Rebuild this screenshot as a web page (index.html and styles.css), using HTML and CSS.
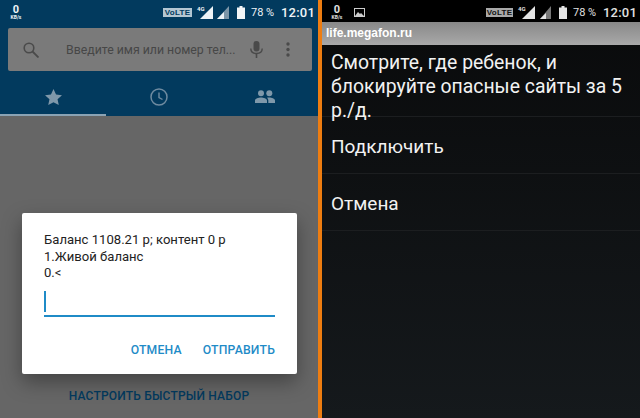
FILE: index.html
```html
<!DOCTYPE html>
<html lang="ru">
<head>
<meta charset="utf-8">
<title>USSD</title>
<link rel="stylesheet" href="styles.css">
</head>
<body>
<div class="page">
  <section class="phone left">
    <header class="header">
      <div class="status">
        <div class="speed"><span class="num">0</span><span class="unit">KB/s</span></div>
        <div class="spacer"></div>
        <span class="volte">VoLTE</span>
        <span class="net">4G</span>
        <svg class="sig" width="13" height="13" viewBox="0 0 13 13"><path d="M13 0V13H0Z" fill="#eef3f6"/></svg>
        <svg class="sig2" width="12" height="13" viewBox="0 0 12 13"><path d="M12 0V13H0Z" fill="#7d96a8"/><path d="M7 6V13H0Z" fill="#eef3f6"/></svg>
        <svg class="batt" width="8" height="13" viewBox="0 0 8 13"><path d="M2.500 0h3v1.500H8V13H0V1.500h2.500Z" fill="#f2f5f7"/></svg>
        <span class="pct">78 %</span>
        <span class="time">12:01</span>
      </div>
      <div class="search">
        <svg class="ic-search" width="16" height="16" viewBox="0 0 16 16"><circle cx="6" cy="6" r="4.800" fill="none" stroke="#4a4a4a" stroke-width="1.600"/><path d="M9.500 9.500l6 6" stroke="#4a4a4a" stroke-width="1.800"/></svg>
        <span class="hint">Введите имя или номер тел...</span>
        <svg class="ic-mic" width="13" height="17" viewBox="0 0 13 17"><rect x="3.500" y="0" width="6" height="10.500" rx="3" fill="#4a4a4a"/><path d="M.8 7.500c0 3.200 2.500 5 5.700 5s5.700-1.800 5.700-5" fill="none" stroke="#4a4a4a" stroke-width="1.400"/><path d="M6.500 12v5" stroke="#4a4a4a" stroke-width="1.600"/></svg>
        <svg class="ic-more" width="4" height="15" viewBox="0 0 4 15"><circle cx="2" cy="2" r="1.700" fill="#4a4a4a"/><circle cx="2" cy="7.500" r="1.700" fill="#4a4a4a"/><circle cx="2" cy="13" r="1.700" fill="#4a4a4a"/></svg>
      </div>
      <div class="tabs">
        <div class="tab active">
          <svg width="17" height="16" viewBox="0 0 18 17"><path d="M9 0l2.700 5.900 6.300.7-4.700 4.300 1.300 6.100L9 14l-5.600 3 1.300-6.100L0 6.600l6.300-.7Z" fill="#7f98aa"/></svg>
        </div>
        <div class="tab">
          <svg width="18" height="18" viewBox="0 0 18 18"><circle cx="9" cy="9" r="8" fill="none" stroke="#6f8ba0" stroke-width="1.500"/><path d="M9 4.500V9.500l3.500 2" fill="none" stroke="#6f8ba0" stroke-width="1.400"/></svg>
        </div>
        <div class="tab">
          <svg width="20" height="13" viewBox="0 0 20 13"><circle cx="6" cy="3.200" r="3" fill="#7f98aa"/><circle cx="14.300" cy="3.200" r="3" fill="#7f98aa"/><path d="M0 13v-2.500C0 8.500 3.500 7.500 6 7.500s6 1 6 3V13ZM13.300 13v-2.500c0-1.200-.5-2.100-1.400-2.800.8-.2 1.700-.2 2.400-.2 2.200 0 5.700 1 5.700 3V13Z" fill="#7f98aa"/></svg>
        </div>
      </div>
    </header>
    <div class="body">
      <div class="quick">НАСТРОИТЬ БЫСТРЫЙ НАБОР</div>
    </div>
    <div class="dialog">
      <p class="msg">Баланс 1108.21 р; контент 0 р<br>1.Живой баланс<br>0.&lt;</p>
      <div class="field"><span class="caret"></span></div>
      <div class="actions"><span>ОТМЕНА</span><span>ОТПРАВИТЬ</span></div>
    </div>
  </section>
  <div class="divider"></div>
  <section class="phone right">
    <div class="status dark">
      <div class="speed"><span class="num">0</span><span class="unit">KB/s</span></div>
      <svg class="pic" width="11" height="9" viewBox="0 0 11 9"><rect x=".5" y=".5" width="10" height="8" fill="none" stroke="#ccc"/><path d="M1 8l3-4 2 2 1-1 3 3Z" fill="#ccc"/></svg>
      <div class="spacer"></div>
      <span class="volte">VoLTE</span>
      <span class="net">4G</span>
      <svg class="sig" width="13" height="13" viewBox="0 0 13 13"><path d="M13 0V13H0Z" fill="#e4e4e4"/></svg>
      <svg class="sig2" width="11" height="13" viewBox="0 0 11 13"><path d="M11 0V13H0Z" fill="#777"/><path d="M6 7V13H0Z" fill="#e4e4e4"/></svg>
      <svg class="batt" width="8" height="13" viewBox="0 0 8 13"><path d="M2.500 0h3v1.500H8V13H0V1.500h2.500Z" fill="#e4e4e4"/></svg>
      <span class="pct">78 %</span>
      <span class="time">12:01</span>
    </div>
    <div class="urlbar">life.megafon.ru</div>
    <div class="menu">
      <div class="title">Смотрите, где ребенок, и блокируйте опасные сайты за 5 р./д.</div>
      <div class="item">Подключить</div>
      <div class="item">Отмена</div>
    </div>
  </section>
</div>
</body>
</html>
```

FILE: styles.css
```css
* { box-sizing: border-box; }
html, body { margin: 0; padding: 0; }
body { width: 640px; height: 418px; overflow: hidden; font-family: Roboto, "Liberation Sans", sans-serif; background: #000; }
.page { display: flex; width: 640px; height: 418px; }
.phone { position: relative; display: flex; flex-direction: column; height: 418px; overflow: hidden; }
.left { width: 318px; background: #666; }
.right { width: 318px; background: linear-gradient(#090a0b, #15191c); }
.divider { width: 4px; background: #ee7d11; }

.header { flex: none; background: #023a5e; }

.status { display: flex; align-items: center; height: 26px; padding: 0 7px 2px 8px; color: #eef3f6; flex: none; }
.status.dark { height: 22px; background: #000; padding: 2px 7px 0 7px; color: #e0e0e0; }
.speed { display: flex; flex-direction: column; align-items: center; width: 16px; }
.num { font-size: 11px; font-weight: 700; line-height: 9px; }
.unit { font-size: 5px; font-weight: 700; line-height: 6px; }
.spacer { flex: 1; }
.pic { margin-left: 9px; }
.volte { width: 29px; height: 9px; font-family: "Liberation Sans", sans-serif; font-size: 8px; font-weight: 700; line-height: 9px; text-align: center; background: #b4c6d2; color: #023a5e; letter-spacing: .3px; }
.dark .volte { width: 27px; background: #a9a9a9; color: #111; }
.net { width: 7px; margin: -8px -4px 0 5px; font-size: 6px; font-weight: 700; line-height: 7px; }
.dark .net { margin: -8px -3px 0 5px; }
.sig2 { margin-left: 4px; }
.dark .sig2 { margin-left: 5px; }
.batt { margin-left: 8px; }
.pct { width: 21px; margin-left: 6px; font-size: 11px; white-space: nowrap; }
.time { width: 30px; margin-left: 9px; font-size: 13px; font-weight: 500; letter-spacing: .2px; white-space: nowrap; }

.search { display: flex; align-items: center; height: 43px; margin: 2px 6px 0 8px; padding: 0 22px 0 15px; background: #7a7a7a; border-radius: 2px; }
.hint { flex: 1; margin-left: 27px; font-size: 12.300px; color: #474747; white-space: nowrap; }
.ic-mic { margin-right: 23px; }

.tabs { display: grid; grid-template-columns: repeat(3, 1fr); height: 45px; }
.tab { display: flex; align-items: center; justify-content: center; padding-top: 8px; border-bottom: 2px solid transparent; }
.tab.active { border-bottom-color: #8ba3b4; }

.body { flex: 1; position: relative; }
.quick { position: absolute; left: 0; right: 0; top: 272px; text-align: center; font-size: 12px; line-height: 16px; font-weight: 500; color: #033a5e; letter-spacing: .2px; }

.dialog { position: absolute; left: 22px; top: 213px; display: flex; flex-direction: column; width: 275px; height: 161px; padding: 19px 22px 0; background: #fff; border-radius: 2px; box-shadow: 0 8px 20px rgba(0,0,0,.35); }
.msg { margin: 0; font-size: 13.100px; line-height: 16.500px; color: #222; }
.field { flex: none; height: 35px; padding-top: 9px; border-bottom: 2px solid #1f8bc7; }
.caret { display: block; width: 2px; height: 21px; background: #1f8bc7; }
.actions { display: flex; justify-content: flex-end; gap: 21px; margin-top: 26px; font-size: 12.200px; line-height: 15px; font-weight: 500; color: #1f8bc7; letter-spacing: .2px; }

.urlbar { flex: none; height: 23px; padding-left: 4px; background: linear-gradient(#888, #a9a9a9); color: #fff; font-family: "Liberation Sans", sans-serif; font-size: 12px; font-weight: 700; line-height: 23px; }
.menu { flex: 1; color: #f2f2f2; font-size: 19.400px; }
.title { height: 72px; padding: 6px 5px 0 9px; line-height: 24px; border-bottom: 1px solid #1c1e20; }
.item { display: flex; align-items: center; height: 57px; padding: 2px 9px 0; border-bottom: 1px solid #1c1e20; font-size: 19px; }
```
